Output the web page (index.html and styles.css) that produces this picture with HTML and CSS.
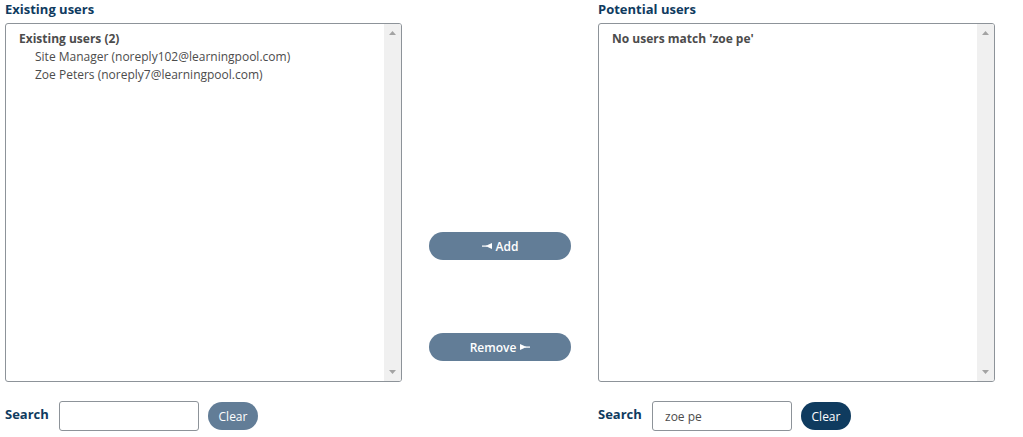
FILE: index.html
```html
<!DOCTYPE html>
<html>
<head>
<meta charset="utf-8">
<link rel="stylesheet" href="styles.css">
</head>
<body>
<div class="selector">
  <div class="col">
    <h3 class="col-title">Existing users</h3>
    <div class="listbox">
      <div class="list-content">
        <div class="group-label">Existing users (2)</div>
        <div class="option">Site Manager (noreply102@learningpool.com)</div>
        <div class="option">Zoe Peters (noreply7@learningpool.com)</div>
      </div>
      <div class="scrollbar">
        <svg class="arrow" width="7" height="4" viewBox="0 0 7 4"><polygon points="0,4 7,4 3.5,0" fill="#a3a3a3"/></svg>
        <svg class="arrow" width="7" height="4" viewBox="0 0 7 4"><polygon points="0,0 7,0 3.5,4" fill="#a3a3a3"/></svg>
      </div>
    </div>
    <div class="search-row">
      <label class="search-label">Search</label>
      <input class="search-input" type="text" value="">
      <button class="btn-clear disabled">Clear</button>
    </div>
  </div>

  <div class="middle">
    <button class="btn-move">
      <svg class="glyph" width="10" height="6" viewBox="0 0 10 6"><rect x="0" y="2.5" width="5" height="1.2" fill="#fff"/><polygon points="3.5,3 10,0 10,6" fill="#fff"/></svg>
      Add
    </button>
    <button class="btn-move">
      Remove
      <svg class="glyph" width="10" height="6" viewBox="0 0 10 6"><polygon points="0,0 0,6 6.5,3" fill="#fff"/><rect x="5" y="2.5" width="5" height="1.2" fill="#fff"/></svg>
    </button>
  </div>

  <div class="col">
    <h3 class="col-title">Potential users</h3>
    <div class="listbox">
      <div class="list-content">
        <div class="group-label">No users match 'zoe pe'</div>
      </div>
      <div class="scrollbar">
        <svg class="arrow" width="7" height="4" viewBox="0 0 7 4"><polygon points="0,4 7,4 3.5,0" fill="#a3a3a3"/></svg>
        <svg class="arrow" width="7" height="4" viewBox="0 0 7 4"><polygon points="0,0 7,0 3.5,4" fill="#a3a3a3"/></svg>
      </div>
    </div>
    <div class="search-row">
      <label class="search-label">Search</label>
      <input class="search-input" type="text" value="zoe pe">
      <button class="btn-clear">Clear</button>
    </div>
  </div>
</div>
</body>
</html>
```

FILE: styles.css
```css
* { box-sizing: border-box; }

body {
  margin: 0;
  padding: 0 5px;
  background: #fff;
  font-family: "Open Sans", "Noto Sans", sans-serif;
  font-size: 12px;
  color: #4c4c4c;
}

.selector {
  display: flex;
  align-items: flex-start;
}

.col {
  width: 397px;
  display: flex;
  flex-direction: column;
}

.col-title {
  margin: 0;
  height: 23px;
  padding-top: 0;
  font-size: 13px;
  line-height: 18px;
  font-weight: 700;
  color: #0f3b5f;
}

.listbox {
  height: 359px;
  border: 1px solid #8d9399;
  border-radius: 3px;
  display: flex;
  overflow: hidden;
}

.list-content {
  flex: 1;
  padding: 6px 13px;
}

.group-label {
  font-weight: 700;
  line-height: 18px;
  color: #4c4c4c;
}

.option {
  padding-left: 16px;
  line-height: 18px;
  color: #4c4c4c;
}

.scrollbar {
  width: 17px;
  background: #f0f0f0;
  display: flex;
  flex-direction: column;
  justify-content: space-between;
  align-items: center;
  padding: 7px 0 7px;
}

.arrow { display: block; }

.search-row {
  display: flex;
  align-items: center;
  margin-top: 19px;
}

.search-label {
  font-weight: 700;
  font-size: 13px;
  color: #0f3b5f;
  width: 54px;
  padding-bottom: 4px;
}

.search-input {
  width: 140px;
  height: 30px;
  border: 1px solid #8d9399;
  border-radius: 3px;
  padding: 0 12px;
  font-family: inherit;
  font-size: 12px;
  color: #4c4c4c;
  outline: none;
}

.btn-clear {
  margin-left: 9px;
  width: 50px;
  height: 28px;
  border: none;
  border-radius: 14px;
  background: #0f3b5f;
  color: #fff;
  font-family: inherit;
  font-size: 12px;
  padding: 0;
}

.btn-clear.disabled {
  background: #627d97;
}

.middle {
  width: 196px;
  display: flex;
  flex-direction: column;
  align-items: center;
  padding-top: 232px;
  gap: 73px;
}

.btn-move {
  width: 142px;
  height: 28px;
  border: none;
  border-radius: 14px;
  background: #627d97;
  color: #fff;
  font-family: inherit;
  font-size: 12px;
  font-weight: 600;
  display: flex;
  align-items: center;
  justify-content: center;
  gap: 4px;
  padding: 0;
}

.glyph { display: block; }
```
